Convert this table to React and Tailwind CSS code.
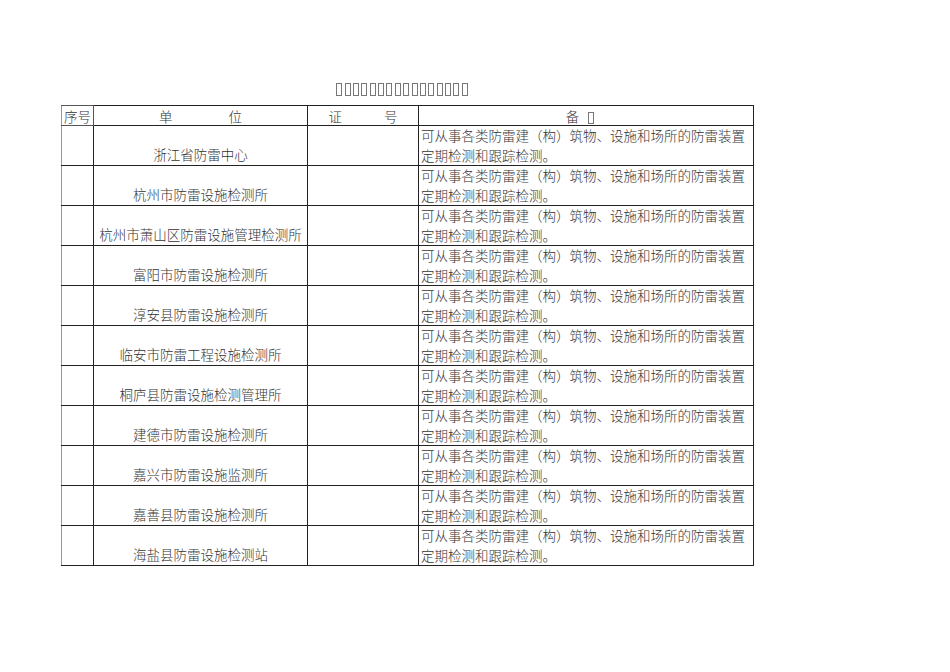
import React from "react";

const rows = [
  "浙江省防雷中心",
  "杭州市防雷设施检测所",
  "杭州市萧山区防雷设施管理检测所",
  "富阳市防雷设施检测所",
  "淳安县防雷设施检测所",
  "临安市防雷工程设施检测所",
  "桐庐县防雷设施检测管理所",
  "建德市防雷设施检测所",
  "嘉兴市防雷设施监测所",
  "嘉善县防雷设施检测所",
  "海盐县防雷设施检测站",
];

function Tofu() {
  return (
    <span className="inline-block w-[6px] h-[13px] border border-[#777] mx-[1.2px] align-middle" />
  );
}

export default function App() {
  return (
    <div
      className="w-[950px] h-[672px] bg-white text-[#333] text-[13.5px] leading-[18px] font-light"
      style={{ fontFamily: '"Noto Sans CJK SC", "Noto Sans", sans-serif' }}
    >
      <div className="pt-[83px] pl-[335px] h-[105px] flex items-start">
        {Array.from({ length: 16 }).map((_, i) => (
          <Tofu key={i} />
        ))}
      </div>
      <table className="ml-[61px] border-collapse table-fixed w-[692px]">
        <colgroup>
          <col className="w-[32px]" />
          <col className="w-[214px]" />
          <col className="w-[111px]" />
          <col className="w-[335px]" />
        </colgroup>
        <thead>
          <tr className="h-[20px]">
            <th className="font-light border border-[#555] border-l-[#999] p-0 text-left pl-[2px] leading-[18px] align-middle">
              序号
            </th>
            <th className="font-light border border-[#222] p-0 align-middle">
              <span className="pr-[4px]">单</span>
              <span className="pl-[52px]">位</span>
            </th>
            <th className="font-light border border-[#222] p-0 align-middle">
              <span className="pr-[2px]">证</span>
              <span className="pl-[40px]">号</span>
            </th>
            <th className="font-light border border-[#222] border-l-[#999] p-0 align-middle">
              <span className="pr-[9px]">备</span>
              <span className="inline-block w-[6px] h-[12px] border border-[#777] mr-[12px] align-middle" />
            </th>
          </tr>
        </thead>
        <tbody>
          {rows.map((name, i) => (
            <tr key={i} className="h-[40px]">
              <td className="border border-[#222] border-l-[#999] p-0" />
              <td className="border border-[#222] p-0 align-bottom text-center pb-[2px] whitespace-nowrap">
                {name}
              </td>
              <td className="border border-[#222] p-0" />
              <td className="border border-[#222] border-l-[#999] p-0 pl-[2px] align-top pt-0 leading-[19.5px] whitespace-nowrap">
                可从事各类防雷建（构）筑物、设施和场所的防雷装置
                <br />
                定期检测和跟踪检测。
              </td>
            </tr>
          ))}
        </tbody>
      </table>
    </div>
  );
}
